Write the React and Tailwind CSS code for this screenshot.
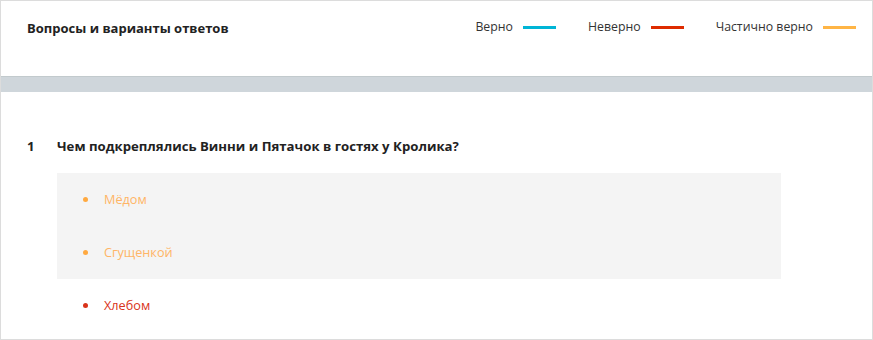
import React from "react"

const legend = [
  { label: "Верно", color: "bg-[#00b5d6]" },
  { label: "Неверно", color: "bg-[#de2b00]" },
  { label: "Частично верно", color: "bg-[#ffb545]" },
]

const answers = [
  { text: "Мёдом", tone: "partial", shaded: true },
  { text: "Сгущенкой", tone: "partial", shaded: true },
  { text: "Хлебом", tone: "wrong", shaded: false },
]

function Answer({ text, tone }) {
  const textColor = tone === "wrong" ? "text-[#d9331a]" : "text-[#ffb566]"
  const dotColor = tone === "wrong" ? "bg-[#d9331a]" : "bg-[#ffa940]"
  return (
    <li className="flex items-center h-[53px] pl-[26px]">
      <span className={`w-[5px] h-[5px] rounded-full ${dotColor}`} />
      <span className={`ml-[16px] text-[12.7px] ${textColor}`}>{text}</span>
    </li>
  )
}

export default function App() {
  const shaded = answers.filter((a) => a.shaded)
  const rest = answers.filter((a) => !a.shaded)

  return (
    <div
      className="w-[873px] h-[340px] border border-[#dcdcdc] bg-white overflow-hidden"
      style={{ fontFamily: '"Open Sans", "Noto Sans", sans-serif' }}
    >
      <header className="h-[75px] flex items-start justify-between pl-[26px] pr-[16px] pt-[18px]">
        <h2 className="text-[13px] leading-[18px] font-bold text-[#222]">Вопросы и варианты ответов</h2>
        <div className="flex items-center gap-[32px] -mt-[1px]">
          {legend.map((item) => (
            <div key={item.label} className="flex items-center gap-[10px]">
              <span className="text-[12.3px] leading-[18px] text-[#333]">{item.label}</span>
              <span className={`w-[33px] h-[3px] ${item.color}`} />
            </div>
          ))}
        </div>
      </header>
      <div className="h-[16px] bg-[#cfd6db] border-t border-[#c2cacd]" />

      <section className="pt-[44px] pl-[26px]">
        <div className="flex items-center">
          <span className="w-[30px] text-[13.2px] leading-[20px] font-bold text-[#222]">1</span>
          <h3 className="text-[13.2px] leading-[20px] font-bold text-[#222]">
            Чем подкреплялись Винни и Пятачок в гостях у Кролика?
          </h3>
        </div>
        <div className="ml-[30px] mt-[17px] w-[724px]">
          <ul className="bg-[#f4f4f4]">
            {shaded.map((a) => (
              <Answer key={a.text} {...a} />
            ))}
          </ul>
          <ul>
            {rest.map((a) => (
              <Answer key={a.text} {...a} />
            ))}
          </ul>
        </div>
      </section>
    </div>
  )
}
